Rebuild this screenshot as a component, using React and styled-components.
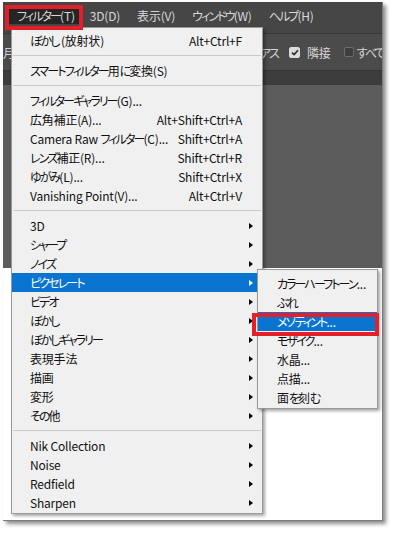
import React from 'react';
import styled, { createGlobalStyle } from 'styled-components';

const GlobalStyle = createGlobalStyle`
  html, body { margin: 0; padding: 0; background: #ffffff; }
  body { font-family: "Noto Sans CJK JP", sans-serif; }
  #root { width: 399px; height: 536px; }
`;

const Page = styled.div`
  width: 399px;
  height: 536px;
  box-sizing: border-box;
  padding: 2px 0 0 3px;
  background: #ffffff;
  overflow: hidden;
`;

const Frame = styled.div`
  position: relative;
  width: 379px;
  height: 518px;
  background: #ffffff;
  border-right: 1px solid #7b7b7b;
  border-bottom: 1px solid #7b7b7b;
  box-shadow: 3px 3px 4px rgba(0, 0, 0, 0.45);
  font-feature-settings: "palt";
  letter-spacing: -0.2px;
`;

const Workspace = styled.div`
  height: 266px;
  display: flex;
  flex-direction: column;
  overflow: hidden;
  background: #5b5b5b;
`;

const MenuBar = styled.div`
  flex: none;
  height: 32px;
  box-sizing: border-box;
  display: flex;
  align-items: flex-start;
  padding: 5px 0 0 6px;
  background: #464646;
  border-bottom: 1px solid #393939;
`;

const BarItem = styled.div`
  height: 17px;
  line-height: 17px;
  padding: ${(p) => (p.$active ? '0 6px 0 8px' : '0 8px')};
  margin-right: 1px;
  font-size: 12px;
  color: #d8d8d8;
  white-space: nowrap;
  background: ${(p) => (p.$active ? '#252525' : 'transparent')};
`;

const OptionsBar = styled.div`
  flex: none;
  height: 36px;
  display: flex;
  align-items: center;
  background: #4b4b4b;
  font-size: 12px;
  color: #d4d4d4;
  white-space: nowrap;
`;

const EdgeText = styled.span`
  flex: none;
  width: 8px;
  overflow: hidden;
`;

const RightText = styled.span`
  flex: none;
  width: 267px;
  text-align: right;
  margin-right: 11px;
`;

const Check = styled.span`
  flex: none;
  display: inline-flex;
  align-items: center;
  justify-content: center;
  box-sizing: border-box;
  width: ${(p) => (p.$checked ? '11px' : '10px')};
  height: ${(p) => (p.$checked ? '11px' : '10px')};
  border-radius: 2px;
  background: ${(p) => (p.$checked ? '#dcdcdc' : '#3e3e3e')};
  border: 1px solid ${(p) => (p.$checked ? '#dcdcdc' : '#6c6c6c')};
  margin-right: ${(p) => (p.$checked ? '7px' : '3px')};
`;

const OptLabel = styled.span`
  flex: none;
  margin-right: 13px;
`;

const Band = styled.div`
  flex: none;
  height: 14px;
  background: #3c3c3c;
  border-top: 1px solid #353535;
`;

const Canvas = styled.div`
  flex: 1;
  background: #5c5c5c;
`;

const Menu = styled.div`
  position: absolute;
  left: 8px;
  top: 25px;
  width: 252px;
  box-sizing: border-box;
  padding: 3px 0 1px;
  background: #f0f0f0;
  border: 1px solid #999999;
  box-shadow: 2px 2px 3px rgba(0, 0, 0, 0.35);
  z-index: 2;
`;

const SubMenu = styled(Menu)`
  left: 254px;
  top: 267px;
  width: 121px;
  padding: 4px 0 1px;
  z-index: 3;
`;

const Item = styled.div`
  display: flex;
  align-items: center;
  height: 19px;
  padding-left: ${(p) => (p.$sub ? '19px' : '18px')};
  font-size: 12px;
  white-space: nowrap;
  color: ${(p) => (p.$active ? '#ffffff' : '#111111')};
  background: ${(p) => (p.$active ? '#0a74d1' : 'transparent')};
`;

const Label = styled.span`
  flex: 1;
`;

const Shortcut = styled.span`
  flex: none;
`;

const Kana = styled.span`
  letter-spacing: -1.9px;
`;

const ArrowSlot = styled.span`
  flex: none;
  width: 20px;
  height: 19px;
  display: flex;
  align-items: center;
  justify-content: flex-end;
  padding-right: 9px;
  box-sizing: border-box;
`;

const Arrow = styled.span`
  width: 0;
  height: 0;
  border-top: 3.5px solid transparent;
  border-bottom: 3.5px solid transparent;
  border-left: 4px solid ${(p) => (p.$active ? '#ffffff' : '#000000')};
`;

const Separator = styled.div`
  height: 11px;
  display: flex;
  align-items: center;
  padding: 0 1px;
  &::before {
    content: '';
    flex: 1;
    height: 1px;
    background: #c9c9c9;
  }
`;

const RedBox = styled.div`
  position: absolute;
  box-sizing: border-box;
  border: 4px solid #e3202a;
  z-index: 5;
  left: ${(p) => p.$x}px;
  top: ${(p) => p.$y}px;
  width: ${(p) => p.$w}px;
  height: ${(p) => p.$h}px;
`;

const menuItems = [
  { label: 'ぼかし (放射状)', shortcut: 'Alt+Ctrl+F' },
  'sep',
  { label: 'スマートフィルター用に変換(S)' },
  'sep',
  { label: 'フィルターギャラリー(G)...' },
  { label: '広角補正(A)...', shortcut: 'Alt+Shift+Ctrl+A' },
  { label: 'Camera Raw フィルター(C)...', shortcut: 'Shift+Ctrl+A' },
  { label: 'レンズ補正(R)...', shortcut: 'Shift+Ctrl+R' },
  { label: 'ゆがみ(L)...', shortcut: 'Shift+Ctrl+X' },
  { label: 'Vanishing Point(V)...', shortcut: 'Alt+Ctrl+V' },
  'sep',
  { label: '3D', sub: true },
  { label: 'シャープ', sub: true },
  { label: 'ノイズ', sub: true },
  { label: 'ピクセレート', sub: true, active: true },
  { label: 'ビデオ', sub: true },
  { label: 'ぼかし', sub: true },
  { label: 'ぼかしギャラリー', sub: true },
  { label: '表現手法', sub: true },
  { label: '描画', sub: true },
  { label: '変形', sub: true },
  { label: 'その他', sub: true },
  'sep',
  { label: 'Nik Collection', sub: true },
  { label: 'Noise', sub: true },
  { label: 'Redfield', sub: true },
  { label: 'Sharpen', sub: true },
];

const subItems = [
  { label: 'カラーハーフトーン...' },
  { label: 'ぶれ' },
  { label: 'メゾティント...', active: true },
  { label: 'モザイク...' },
  { label: '水晶...' },
  { label: '点描...' },
  { label: '面を刻む' },
];

const barItems = ['フィルター(T)', '3D(D)', '表示(V)', 'ウィンドウ(W)', 'ヘルプ(H)'];

function Txt({ text }) {
  const parts = text.split(/([\u3040-\u30ff]+)/);
  return parts.map((p, i) =>
    /[\u3040-\u30ff]/.test(p) ? <Kana key={i}>{p}</Kana> : <React.Fragment key={i}>{p}</React.Fragment>
  );
}

function CheckMark() {
  return (
    <svg width="8" height="7" viewBox="0 0 8 7">
      <path d="M1 3.6 L3.1 5.6 L7 1.2" fill="none" stroke="#2e2e2e" strokeWidth="1.7" />
    </svg>
  );
}

export default function App() {
  return (
    <>
      <GlobalStyle />
      <Page>
        <Frame>
          <Workspace>
            <MenuBar>
              {barItems.map((t, i) => (
                <BarItem key={t} $active={i === 0}><Txt text={t} /></BarItem>
              ))}
            </MenuBar>
            <OptionsBar>
              <EdgeText>月</EdgeText>
              <RightText><Txt text="アス" /></RightText>
              <Check $checked><CheckMark /></Check>
              <OptLabel>隣接</OptLabel>
              <Check />
              <span><Txt text="すべて" /></span>
            </OptionsBar>
            <Band />
            <Canvas />
          </Workspace>

          <Menu>
            {menuItems.map((m, i) =>
              m === 'sep' ? (
                <Separator key={i} />
              ) : (
                <Item key={i} $active={m.active}>
                  <Label><Txt text={m.label} /></Label>
                  {m.shortcut && <Shortcut>{m.shortcut}</Shortcut>}
                  <ArrowSlot>{m.sub && <Arrow $active={m.active} />}</ArrowSlot>
                </Item>
              )
            )}
          </Menu>

          <SubMenu>
            {subItems.map((m, i) => (
              <Item key={i} $sub $active={m.active}>
                <Label><Txt text={m.label} /></Label>
              </Item>
            ))}
          </SubMenu>

          <RedBox $x={2} $y={3} $w={78} $h={25} />
          <RedBox $x={249} $y={311} $w={127} $h={23} />
        </Frame>
      </Page>
    </>
  );
}
